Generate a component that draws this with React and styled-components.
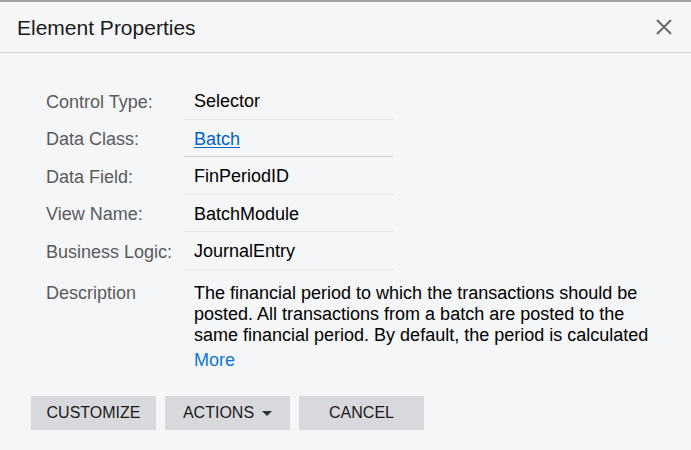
import React from "react";
import styled, { createGlobalStyle } from "styled-components";

const GlobalStyle = createGlobalStyle`
  html, body {
    margin: 0;
    padding: 0;
    background: #f5f6f8;
  }
  body {
    font-family: "Liberation Sans", Arial, sans-serif;
  }
`;

const Dialog = styled.div`
  width: 691px;
  height: 450px;
  box-sizing: border-box;
  border-top: 2px solid #a3a3a3;
  background: #f5f6f8;
  display: flex;
  flex-direction: column;
`;

const Header = styled.div`
  height: 50px;
  border-bottom: 1px solid #d4d5d8;
  display: flex;
  align-items: center;
  justify-content: space-between;
  padding: 0 19px 0 17px;
`;

const Title = styled.h1`
  margin: 0;
  font-size: 21px;
  font-weight: 400;
  color: #1a1a1a;
  padding-top: 2px;
`;

const CloseButton = styled.button`
  border: 0;
  background: none;
  padding: 0;
  width: 16px;
  height: 16px;
  display: flex;
  cursor: pointer;
`;

const Body = styled.div`
  padding: 29px 0 0 46px;
`;

const Grid = styled.div`
  display: grid;
  grid-template-columns: 138px 209px;
`;

const Label = styled.div`
  height: 37.5px;
  display: flex;
  align-items: center;
  font-size: 18px;
  color: #595a5c;
  padding-top: 3px;
  box-sizing: border-box;
`;

const Value = styled.div`
  height: 37.5px;
  box-sizing: border-box;
  display: flex;
  align-items: center;
  padding: 3px 0 0 10px;
  font-size: 18px;
  color: #000;
  border-bottom: 1px ${(p) => (p.$solid ? "solid #d2d3d6" : "dotted #dcdde0")};
`;

const Link = styled.a`
  color: #0063c6;
  text-decoration: underline;
  text-underline-offset: 2px;
  cursor: pointer;
`;

const DescRow = styled.div`
  display: flex;
  margin-top: 13px;
`;

const DescLabel = styled.div`
  width: 148px;
  font-size: 18px;
  line-height: 21px;
  color: #595a5c;
`;

const DescText = styled.div`
  width: 466px;
  font-size: 18px;
  line-height: 21px;
  color: #000;
`;

const Paragraph = styled.p`
  margin: 0;
`;

const More = styled.a`
  display: block;
  margin-top: 4px;
  color: #0a78d2;
  cursor: pointer;
`;

const Footer = styled.div`
  display: flex;
  gap: 9px;
  padding: 25px 0 0 31px;
`;

const Button = styled.button`
  width: 125px;
  height: 34px;
  border: 0;
  background: #d8d9dc;
  color: #1a1a1a;
  font-family: "Liberation Sans", Arial, sans-serif;
  font-size: 16px;
  text-transform: uppercase;
  display: flex;
  align-items: center;
  justify-content: center;
  gap: 8px;
  padding: 0;
  cursor: pointer;
`;

const Caret = styled.span`
  width: 0;
  height: 0;
  border-left: 5px solid transparent;
  border-right: 5px solid transparent;
  border-top: 5px solid #333;
  margin-top: 1px;
`;

const rows = [
  { label: "Control Type:", value: "Selector" },
  { label: "Data Class:", value: "Batch", link: true },
  { label: "Data Field:", value: "FinPeriodID" },
  { label: "View Name:", value: "BatchModule" },
  { label: "Business Logic:", value: "JournalEntry" },
];

const App = () => (
  <>
    <GlobalStyle />
    <Dialog>
      <Header>
        <Title>Element Properties</Title>
        <CloseButton aria-label="Close">
          <svg width="16" height="16" viewBox="0 0 16 16">
            <path d="M1 1L15 15M15 1L1 15" stroke="#666" strokeWidth="1.8" />
          </svg>
        </CloseButton>
      </Header>
      <Body>
        <Grid>
          {rows.map((r) => (
            <React.Fragment key={r.label}>
              <Label>{r.label}</Label>
              <Value $solid={r.link}>
                {r.link ? <Link>{r.value}</Link> : r.value}
              </Value>
            </React.Fragment>
          ))}
        </Grid>
        <DescRow>
          <DescLabel>Description</DescLabel>
          <DescText>
            <Paragraph>
              The financial period to which the transactions should be posted.
              All transactions from a batch are posted to the same financial
              period. By default, the period is calculated
            </Paragraph>
            <More>More</More>
          </DescText>
        </DescRow>
      </Body>
      <Footer>
        <Button>Customize</Button>
        <Button>
          Actions <Caret />
        </Button>
        <Button>Cancel</Button>
      </Footer>
    </Dialog>
  </>
);

export default App;
